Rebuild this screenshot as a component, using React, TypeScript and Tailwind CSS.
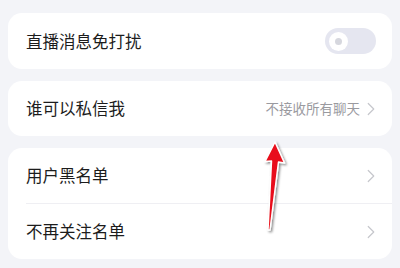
import {ChevronRight} from "lucide-react";

const font = {fontFamily: '"Noto Sans CJK SC", "Noto Sans", sans-serif'};

const Chevron = () => (
    <ChevronRight className="w-[22px] h-[22px] text-[#c6c7cc]" strokeWidth={1.3}/>
)

const Row: React.FC<{ label: string; right?: string; children?: React.ReactNode }> = ({label, right, children}) => {
    return (
        <div className="h-[55px] flex items-center justify-between pl-[18px] pr-[10px]">
            <p className="text-[16.5px] text-[#1c1c1c]">{label}</p>
            <div className="flex items-center">
                {right && <span className="text-[13.5px] text-[#9a9a9f]">{right}</span>}
                {children}
            </div>
        </div>
    )
}

export default function App() {
    return (
        <div className="w-[400px] h-[268px] bg-[#f3f4f8] relative overflow-hidden" style={font}>
            <div className="pt-[13px] px-[8px] flex flex-col gap-[12px]">
                <div className="bg-white rounded-[14px] h-[56px]">
                    <div className="h-[56px] flex items-center justify-between pl-[18px] pr-[16px]">
                        <p className="text-[16.5px] text-[#1c1c1c]">直播消息免打扰</p>
                        <div className="w-[51px] h-[26px] rounded-full bg-[#e5e6f0] flex items-center pl-[4px]">
                            <div className="w-[19px] h-[19px] rounded-full bg-white flex items-center justify-center">
                                <div className="w-[7px] h-[7px] rounded-full bg-[#d6d7de]"></div>
                            </div>
                        </div>
                    </div>
                </div>

                <div className="bg-white rounded-[14px]">
                    <Row label="谁可以私信我" right="不接收所有聊天"><Chevron/></Row>
                </div>

                <div className="bg-white rounded-[14px]">
                    <Row label="用户黑名单"><Chevron/></Row>
                    <div className="ml-[18px] h-px bg-[#efeff3]"></div>
                    <Row label="不再关注名单"><Chevron/></Row>
                </div>
            </div>

            {/* annotation arrow */}
            <svg className="absolute left-[255px] top-[136px]" width="40" height="100" viewBox="0 0 40 100">
                <defs>
                    <filter id="sh" x="-50%" y="-50%" width="200%" height="200%">
                        <feDropShadow dx="1.5" dy="1.5" stdDeviation="1.2" floodColor="#000" floodOpacity="0.45"/>
                    </filter>
                </defs>
                <path d="M20 6 L29.5 27 L23.5 26 L15 94 L13 94 L16.5 25 L10 25.5 Z"
                      fill="#e8101a" stroke="#fff" strokeWidth="1.5" strokeLinejoin="round" filter="url(#sh)"/>
            </svg>
        </div>
    )
}
